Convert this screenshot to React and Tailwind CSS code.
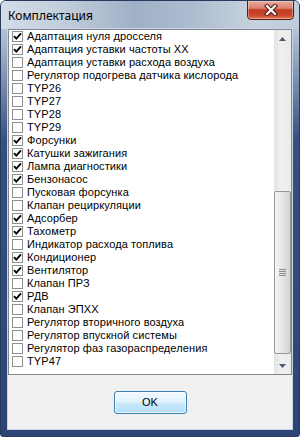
import React from "react";

const items = [
  ["Адаптация нуля дросселя", true],
  ["Адаптация уставки частоты XX", true],
  ["Адаптация уставки расхода воздуха", false],
  ["Регулятор подогрева датчика кислорода", false],
  ["TYP26", false],
  ["TYP27", false],
  ["TYP28", false],
  ["TYP29", false],
  ["Форсунки", true],
  ["Катушки зажигания", true],
  ["Лампа диагностики", true],
  ["Бензонасос", true],
  ["Пусковая форсунка", false],
  ["Клапан рециркуляции", false],
  ["Адсорбер", true],
  ["Тахометр", true],
  ["Индикатор расхода топлива", false],
  ["Кондиционер", true],
  ["Вентилятор", true],
  ["Клапан ПРЗ", false],
  ["РДВ", true],
  ["Клапан ЭПХХ", false],
  ["Регулятор вторичного воздуха", false],
  ["Регулятор впускной системы", false],
  ["Регулятор фаз газораспределения", false],
  ["TYP47", false],
];

function Check({ checked }) {
  return (
    <div className="w-[11px] h-[11px] border border-[#8e8f8f] bg-white flex items-center justify-center shrink-0">
      {checked && (
        <svg width="9" height="9" viewBox="0 0 9 9">
          <path d="M1 4.2 L3.3 6.6 L8 1.4" fill="none" stroke="#000" strokeWidth="1.9" />
        </svg>
      )}
    </div>
  );
}

export default function App() {
  return (
    <div
      className="w-[300px] h-[437px] relative flex flex-col rounded-t-[6px] rounded-b-[3px] border border-[#27395c] bg-[linear-gradient(180deg,#c4d1e0_0px,#b3c2d5_30px,#7b90b1_80px,#35507f_140px,#2d4576_100%)] overflow-hidden"
      style={{ fontFamily: '"Liberation Sans", Arial, sans-serif' }}
    >
      <div className="absolute inset-x-0 top-0 h-[28px] bg-[linear-gradient(90deg,#d3dce7_0%,#c3cfdd_20%,#9fb0c6_45%,#aebdd0_65%,#c6d2df_85%,#bfccdb_100%)]" />
      <div className="relative h-[27px] flex items-center pl-[7px] shrink-0">
        <span
          className="text-[12px] text-black leading-none mt-[2px]"
          style={{ fontFamily: '"Noto Sans", "Open Sans", sans-serif' }}
        >
          Комплектация
        </span>
        <div className="absolute right-[5px] top-[-1px] w-[47px] h-[20px] rounded-b-[4px] border border-[#5a1c15] bg-[linear-gradient(180deg,#e9a99a_0%,#d98070_40%,#c13a22_50%,#cc4a30_80%,#e07a55_100%)] flex items-center justify-center shadow-[inset_0_0_0_1px_rgba(255,255,255,0.35)]">
          <svg width="14" height="12" viewBox="0 0 14 12">
            <path d="M3 2 L11 10 M11 2 L3 10" stroke="#4a1a12" strokeWidth="4.2" strokeLinecap="square" />
            <path d="M3 2 L11 10 M11 2 L3 10" stroke="#ffffff" strokeWidth="2.2" strokeLinecap="square" />
          </svg>
        </div>
      </div>
      <div className="relative mx-[6px] border border-[#c7d4e4] bg-[#f0f0f0] flex flex-col h-[402px]">
        <div className="h-[346px] border border-[#828790] bg-white flex">
          <div className="flex-1 flex flex-col pl-[3px]">
            {items.map(([label, checked], i) => (
              <div key={i} className="h-[13px] flex items-center gap-[4px]">
                <Check checked={checked} />
                <span className="text-[11px] leading-none tracking-[0.1px] text-black whitespace-nowrap">{label}</span>
              </div>
            ))}
          </div>
          <div className="w-[17px] flex flex-col bg-[linear-gradient(90deg,#e3e3e3,#efefef_40%,#ebebeb)]">
            <div className="h-[17px] flex items-center justify-center">
              <svg width="7" height="4" viewBox="0 0 7 4">
                <path d="M0 4 L3.5 0 L7 4 Z" fill="#4a5a75" />
              </svg>
            </div>
            <div className="flex-1 flex flex-col">
              <div className="h-[144px]" />
              <div className="h-[163px] rounded-[2px] border border-[#979797] bg-[linear-gradient(90deg,#f5f5f5,#e6e6e6_50%,#d3d3d3)] flex flex-col items-center justify-center gap-[1px]">
                <div className="w-[7px] h-[1px] bg-[#8a8a8a]" />
                <div className="w-[7px] h-[1px] bg-[#8a8a8a]" />
                <div className="w-[7px] h-[1px] bg-[#8a8a8a]" />
                <div className="w-[7px] h-[1px] bg-[#8a8a8a]" />
              </div>
            </div>
            <div className="h-[17px] flex items-center justify-center">
              <svg width="7" height="4" viewBox="0 0 7 4">
                <path d="M0 0 L7 0 L3.5 4 Z" fill="#4a5a75" />
              </svg>
            </div>
          </div>
        </div>
        <div className="flex-1 flex justify-center pt-[16px]">
          <div className="w-[73px] h-[23px] rounded-[3px] border border-[#3c7fb1] bg-[linear-gradient(180deg,#f2f9fe_0%,#e3f3fc_45%,#c9e9fb_55%,#b5dff8_100%)] shadow-[inset_0_0_0_1px_rgba(255,255,255,0.7)] flex items-center justify-center text-[11px] text-black">
            OK
          </div>
        </div>
      </div>
    </div>
  );
}
